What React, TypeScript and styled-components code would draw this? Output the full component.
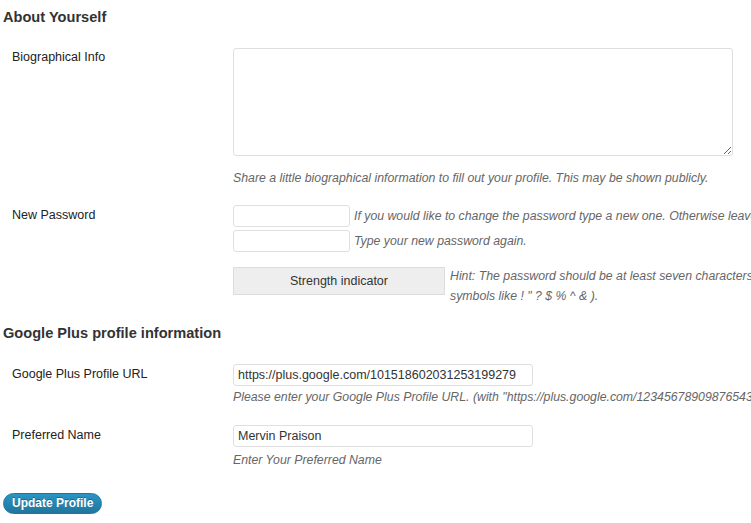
import React, { useState } from 'react';
import styled, { createGlobalStyle } from 'styled-components';

const Global = createGlobalStyle`
  html, body {
    margin: 0;
    padding: 0;
    background: #fff;
    overflow: hidden;
  }
  body {
    font-family: "Liberation Sans", Arial, sans-serif;
    font-size: 12.5px;
    color: #222;
  }
`;

const Page = styled.form`
  width: 1000px;
  padding: 8px 2px 0;
  box-sizing: border-box;
`;

const SectionTitle = styled.h3<{ $top?: number }>`
  margin: ${({ $top }) => $top ?? 0}px 0 0 1px;
  font-size: 14.6px;
  line-height: 18px;
  font-weight: bold;
  color: #333;
`;

const Row = styled.div<{ $top: number }>`
  display: grid;
  grid-template-columns: 231px 1fr;
  margin-top: ${({ $top }) => $top}px;
`;

const Label = styled.label<{ $pad?: number }>`
  padding: ${({ $pad }) => $pad ?? 1}px 0 0 10px;
  line-height: 16px;
  color: #222;
`;

const Field = styled.div`
  display: flex;
  flex-direction: column;
  align-items: flex-start;
`;

const Bio = styled.textarea`
  width: 500px;
  height: 108px;
  box-sizing: border-box;
  border: 1px solid #dfdfdf;
  border-radius: 3px;
  margin: 0;
  resize: vertical;
  font-family: inherit;
`;

const Description = styled.p<{ $top?: number }>`
  margin: ${({ $top }) => $top ?? 0}px 0 0;
  font-size: 12.3px;
  line-height: 16px;
  font-style: italic;
  color: #666;
  white-space: nowrap;
`;

const InlineLine = styled.div<{ $gap?: number }>`
  display: flex;
  align-items: center;
  gap: 4px;
  margin-top: ${({ $gap }) => $gap ?? 0}px;
`;

const TextInput = styled.input<{ $w: number }>`
  width: ${({ $w }) => $w}px;
  height: 22px;
  box-sizing: border-box;
  margin: 0;
  padding: 2px 4px;
  border: 1px solid #dfdfdf;
  border-radius: 3px;
  font-family: inherit;
  font-size: 12.5px;
  color: #333;
  outline: none;
`;

const StrengthWrap = styled.div`
  display: flex;
  align-items: flex-start;
  gap: 5px;
  margin-top: 15px;
`;

const Strength = styled.div`
  width: 212px;
  height: 28px;
  box-sizing: border-box;
  border: 1px solid #dcdcdc;
  background: #eee;
  text-align: center;
  line-height: 27px;
  color: #333;
`;

const Hint = styled.p`
  margin: -1px 0 0;
  font-size: 12.3px;
  font-style: italic;
  color: #666;
  line-height: 20px;
  white-space: nowrap;
`;

const Submit = styled.button`
  margin: 25px 0 0 1px;
  height: 21px;
  padding: 0 8px;
  border: 1px solid #21759b;
  border-radius: 11px;
  background: linear-gradient(to bottom, #2a95c5, #21759b);
  color: #fff;
  font-family: inherit;
  font-size: 12px;
  font-weight: bold;
  line-height: 19px;
  text-shadow: 0 -1px 0 rgba(0, 0, 0, 0.3);
  cursor: pointer;
`;

export default function App() {
  const [bio, setBio] = useState('');
  const [gplus, setGplus] = useState('https://plus.google.com/101518602031253199279');
  const [name, setName] = useState('Mervin Praison');

  return (
    <Page onSubmit={(e) => e.preventDefault()}>
      <Global />
      <SectionTitle>About Yourself</SectionTitle>

      <Row $top={22}>
        <Label htmlFor="description">Biographical Info</Label>
        <Field>
          <Bio id="description" value={bio} onChange={(e) => setBio(e.target.value)} />
          <Description $top={14}>
            Share a little biographical information to fill out your profile. This may be shown publicly.
          </Description>
        </Field>
      </Row>

      <Row $top={19}>
        <Label htmlFor="pass1" $pad={2}>New Password</Label>
        <Field>
          <InlineLine>
            <TextInput id="pass1" type="password" $w={117} />
            <Description>
              If you would like to change the password type a new one. Otherwise leave this blank.
            </Description>
          </InlineLine>
          <InlineLine $gap={3}>
            <TextInput id="pass2" type="password" $w={117} />
            <Description>Type your new password again.</Description>
          </InlineLine>
          <StrengthWrap>
            <Strength>Strength indicator</Strength>
            <Hint>
              Hint: The password should be at least seven characters long. To make it stronger, use upper and lower case letters, numbers and
              <br />
              symbols like ! " ? $ % ^ &amp; ).
            </Hint>
          </StrengthWrap>
        </Field>
      </Row>

      <SectionTitle $top={18}>Google Plus profile information</SectionTitle>

      <Row $top={22}>
        <Label htmlFor="gplus" $pad={2}>Google Plus Profile URL</Label>
        <Field>
          <TextInput id="gplus" $w={300} value={gplus} onChange={(e) => setGplus(e.target.value)} />
          <Description $top={3}>
            Please enter your Google Plus Profile URL. (with "https://plus.google.com/1234567890987654321")
          </Description>
        </Field>
      </Row>

      <Row $top={20}>
        <Label htmlFor="pname" $pad={2}>Preferred Name</Label>
        <Field>
          <TextInput id="pname" $w={300} value={name} onChange={(e) => setName(e.target.value)} />
          <Description $top={5}>Enter Your Preferred Name</Description>
        </Field>
      </Row>

      <Submit type="submit">Update Profile</Submit>
    </Page>
  );
}
